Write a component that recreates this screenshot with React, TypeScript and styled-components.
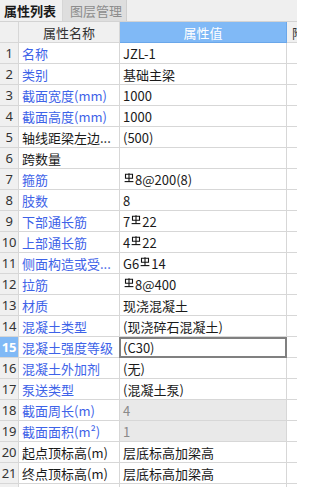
import React from "react";
import styled, { createGlobalStyle } from "styled-components";

const GlobalStyle = createGlobalStyle`
  html, body {
    margin: 0;
    padding: 0;
    background: #ffffff;
    overflow: hidden;
  }
  body {
    font-family: "Noto Sans CJK SC", "Noto Sans", "Liberation Sans", sans-serif;
    font-size: 13px;
  }
`;

type Prop = {
  name: string;
  value: React.ReactNode;
  blue?: boolean;
  locked?: boolean;
};

// 钢筋符号 (HRB400)
const Rebar = () => (
  <RebarIcon viewBox="0 0 10 10" width="10" height="10">
    <path d="M1.5 1.2 H8.5 V5.2 H1.5 Z" fill="none" stroke="#111" strokeWidth="1.1" />
    <path d="M5 0.2 V9" stroke="#111" strokeWidth="1.1" />
    <path d="M0.6 8.6 H9.4" stroke="#111" strokeWidth="1.1" />
  </RebarIcon>
);

const rows: Prop[] = [
  { name: "名称", value: "JZL-1", blue: true },
  { name: "类别", value: "基础主梁", blue: true },
  { name: "截面宽度(mm)", value: "1000", blue: true },
  { name: "截面高度(mm)", value: "1000", blue: true },
  { name: "轴线距梁左边...", value: "(500)" },
  { name: "跨数量", value: "" },
  { name: "箍筋", value: <><Rebar />8@200(8)</>, blue: true },
  { name: "肢数", value: "8", blue: true },
  { name: "下部通长筋", value: <>7<Rebar />22</>, blue: true },
  { name: "上部通长筋", value: <>4<Rebar />22</>, blue: true },
  { name: "侧面构造或受...", value: <>G6<Rebar />14</>, blue: true },
  { name: "拉筋", value: <><Rebar />8@400</>, blue: true },
  { name: "材质", value: "现浇混凝土", blue: true },
  { name: "混凝土类型", value: "(现浇碎石混凝土)", blue: true },
  { name: "混凝土强度等级", value: "(C30)", blue: true },
  { name: "混凝土外加剂", value: "(无)", blue: true },
  { name: "泵送类型", value: "(混凝土泵)", blue: true },
  { name: "截面周长(m)", value: "4", blue: true, locked: true },
  { name: "截面面积(m²)", value: "1", blue: true, locked: true },
  { name: "起点顶标高(m)", value: "层底标高加梁高" },
  { name: "终点顶标高(m)", value: "层底标高加梁高" },
];

const SELECTED = 15;

export default function App() {
  return (
    <>
      <GlobalStyle />
      <Panel>
        <TabBar>
          <Tab active>属性列表</Tab>
          <Tab>图层管理</Tab>
        </TabBar>
        <Grid>
          <Row>
            <HeadCell />
            <HeadCell>属性名称</HeadCell>
            <HeadCell active>属性值</HeadCell>
            <HeadCell>附</HeadCell>
          </Row>
          {rows.map((r, i) => {
            const n = i + 1;
            const sel = n === SELECTED;
            return (
              <Row key={n}>
                <NumCell selected={sel}>{n}</NumCell>
                <NameCell blue={r.blue}>{r.name}</NameCell>
                <ValueCell locked={r.locked} focused={sel}>
                  {r.value}
                </ValueCell>
                <ExtraCell />
              </Row>
            );
          })}
          <Row>
            <NumCell selected={false} />
            <NameCell />
            <ValueCell />
            <ExtraCell />
          </Row>
        </Grid>
      </Panel>
    </>
  );
}

const Panel = styled.div`
  width: 297px;
  height: 487px;
  overflow: hidden;
  background: #ffffff;
`;

const TabBar = styled.div`
  display: flex;
  height: 22px;
  box-sizing: border-box;
  background: #efefef;
  border-bottom: 1px solid #d3d3d3;
`;

const Tab = styled.div<{ active?: boolean }>`
  flex: none;
  display: flex;
  align-items: center;
  box-sizing: border-box;
  height: 21px;
  white-space: nowrap;
  width: ${({ active }) => (active ? "62px" : "65px")};
  padding-left: ${({ active }) => (active ? "4px" : "7px")};
  background: ${({ active }) => (active ? "#f0f0f0" : "#dedede")};
  color: ${({ active }) => (active ? "#1a1a1a" : "#8c8c8c")};
  font-weight: ${({ active }) => (active ? 700 : 400)};
  border-left: ${({ active }) => (active ? "none" : "1px solid #d6d6d6")};
  border-right: ${({ active }) => (active ? "none" : "1px solid #cfcfcf")};
  font-size: 13px;
  line-height: 1;
`;

const Grid = styled.div`
  display: flex;
  flex-direction: column;
`;

const Row = styled.div`
  display: grid;
  grid-template-columns: 19px 101px 167px 1fr;
  height: 21px;
`;

const CellBase = styled.div`
  box-sizing: border-box;
  height: 21px;
  border-right: 1px solid #d7d7d7;
  border-bottom: 1px solid #d7d7d7;
  display: flex;
  align-items: center;
  white-space: nowrap;
  overflow: hidden;
  line-height: 1;
`;

const HeadCell = styled(CellBase)<{ active?: boolean }>`
  justify-content: center;
  background: ${({ active }) => (active ? "#80b9f6" : "#f0f0f0")};
  color: ${({ active }) => (active ? "#ffffff" : "#333333")};
  border-right-color: ${({ active }) => (active ? "#6aa7ea" : "#d7d7d7")};
  border-bottom-color: ${({ active }) => (active ? "#6aa7ea" : "#d7d7d7")};
  &:last-child {
    justify-content: flex-start;
    padding-left: 5px;
    border-right: none;
  }
`;

const NumCell = styled(CellBase)<{ selected: boolean }>`
  justify-content: center;
  background: ${({ selected }) => (selected ? "#80b9f6" : "#f0f0f0")};
  color: ${({ selected }) => (selected ? "#ffffff" : "#333333")};
  font-weight: ${({ selected }) => (selected ? 700 : 400)};
  font-family: "Noto Sans", "Liberation Sans", sans-serif;
  font-size: 13px;
  letter-spacing: -0.3px;
`;

const NameCell = styled(CellBase)<{ blue?: boolean }>`
  padding-left: 3px;
  color: ${({ blue }) => (blue ? "#3d62e8" : "#1a1a1a")};
`;

const ValueCell = styled(CellBase)<{ locked?: boolean; focused?: boolean }>`
  padding-left: 3px;
  background: ${({ locked }) => (locked ? "#e9e9e9" : "#ffffff")};
  color: ${({ locked }) => (locked ? "#8a8a8a" : "#1a1a1a")};
  ${({ focused }) =>
    focused
      ? `
    border: 2px solid #808080;
    margin-left: -1px;
    width: calc(100% + 1px);
    padding-left: 2px;
  `
      : ""}
`;

const ExtraCell = styled(CellBase)`
  border-right: none;
`;

const RebarIcon = styled.svg`
  align-self: flex-start;
  margin-top: 4px;
  margin-right: 1px;
  margin-left: 1px;
  flex-shrink: 0;
`;
